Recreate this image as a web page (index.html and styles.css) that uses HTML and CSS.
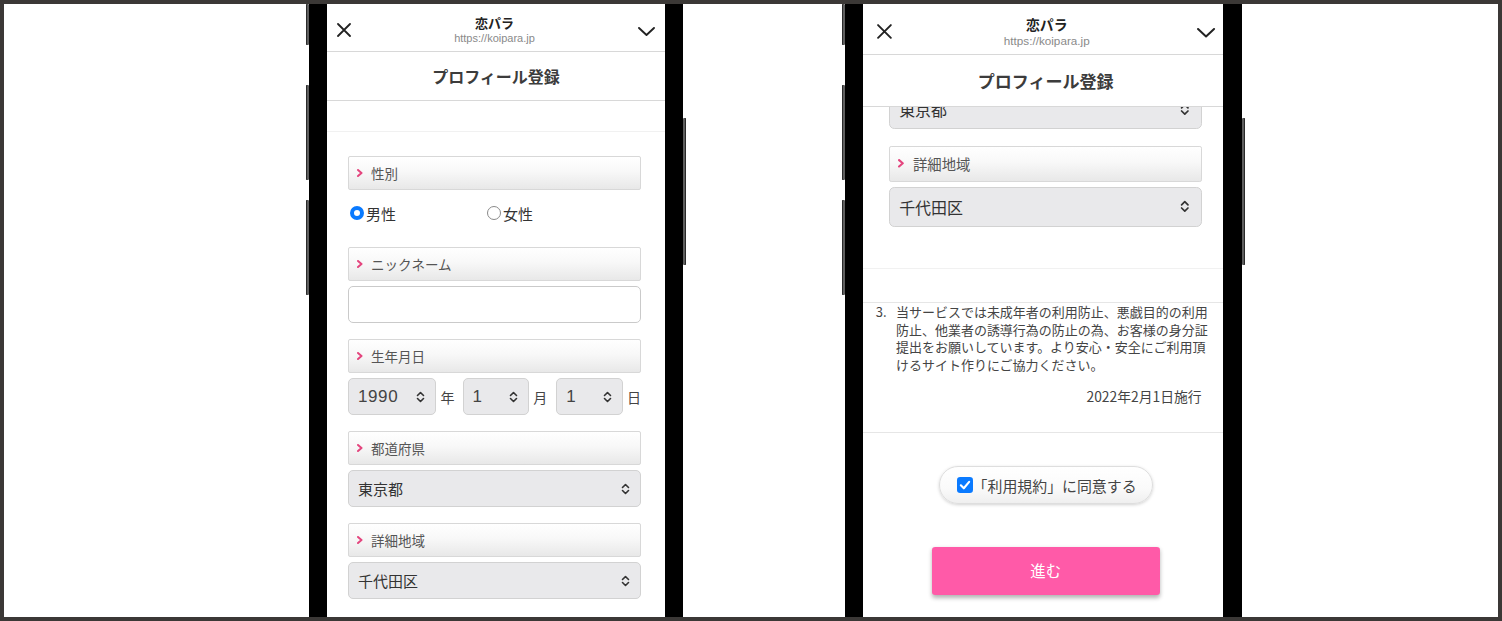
FILE: index.html
```html
<!DOCTYPE html>
<html lang="ja">
<head>
<meta charset="utf-8">
<title>プロフィール登録</title>
<link rel="stylesheet" href="styles.css">
</head>
<body>
<div class="canvas">

  <!-- Phone A -->
  <div class="phone phone-a">
    <div class="side side-left">
      <div class="btn btn-top"></div>
      <div class="btn btn-vol1"></div>
      <div class="btn btn-vol2"></div>
    </div>
    <div class="body">
      <div class="screen">
        <div class="topbar">
          <svg class="ic-x" width="14" height="14" viewBox="0 0 14 14"><path d="M1 1 L13 13 M13 1 L1 13" stroke="#222" stroke-width="1.8" fill="none" stroke-linecap="round"/></svg>
          <div class="site">
            <div class="site-name">恋パラ</div>
            <div class="site-url">https://koipara.jp</div>
          </div>
          <svg class="ic-chev" width="17" height="9" viewBox="0 0 17 9"><polyline points="1,1 8.5,8 16,1" stroke="#222" stroke-width="1.9" fill="none" stroke-linecap="round" stroke-linejoin="round"/></svg>
        </div>
        <div class="titlebar">プロフィール登録</div>
        <div class="spacer"></div>
        <div class="form">
          <div class="label"><svg class="mark" width="6" height="8" viewBox="0 0 6 8"><polyline points="1,1 4.5,4 1,7" stroke="#e4457e" stroke-width="2" fill="none" stroke-linecap="round" stroke-linejoin="round"/></svg>性別</div>
          <div class="radios">
            <span class="radio-item first"><span class="radio on"></span>男性</span>
            <span class="radio-item"><span class="radio"></span>女性</span>
          </div>

          <div class="label"><svg class="mark" width="6" height="8" viewBox="0 0 6 8"><polyline points="1,1 4.5,4 1,7" stroke="#e4457e" stroke-width="2" fill="none" stroke-linecap="round" stroke-linejoin="round"/></svg>ニックネーム</div>
          <div class="input"></div>

          <div class="label"><svg class="mark" width="6" height="8" viewBox="0 0 6 8"><polyline points="1,1 4.5,4 1,7" stroke="#e4457e" stroke-width="2" fill="none" stroke-linecap="round" stroke-linejoin="round"/></svg>生年月日</div>
          <div class="dates">
            <div class="select sel-year"><span class="num">1990</span><svg class="updown" width="9" height="12" viewBox="0 0 9 12"><path d="M1.5 4.5 L4.5 1.5 L7.5 4.5 M1.5 7.5 L4.5 10.5 L7.5 7.5" stroke="#333" stroke-width="1.6" fill="none" stroke-linecap="round" stroke-linejoin="round"/></svg></div>
            <span class="unit u-year">年</span>
            <div class="select sel-md"><span class="num">1</span><svg class="updown" width="9" height="12" viewBox="0 0 9 12"><path d="M1.5 4.5 L4.5 1.5 L7.5 4.5 M1.5 7.5 L4.5 10.5 L7.5 7.5" stroke="#333" stroke-width="1.6" fill="none" stroke-linecap="round" stroke-linejoin="round"/></svg></div>
            <span class="unit u-month">月</span>
            <div class="select sel-md"><span class="num">1</span><svg class="updown" width="9" height="12" viewBox="0 0 9 12"><path d="M1.5 4.5 L4.5 1.5 L7.5 4.5 M1.5 7.5 L4.5 10.5 L7.5 7.5" stroke="#333" stroke-width="1.6" fill="none" stroke-linecap="round" stroke-linejoin="round"/></svg></div>
            <span class="unit u-day">日</span>
          </div>

          <div class="label"><svg class="mark" width="6" height="8" viewBox="0 0 6 8"><polyline points="1,1 4.5,4 1,7" stroke="#e4457e" stroke-width="2" fill="none" stroke-linecap="round" stroke-linejoin="round"/></svg>都道府県</div>
          <div class="select full"><span>東京都</span><svg class="updown" width="9" height="12" viewBox="0 0 9 12"><path d="M1.5 4.5 L4.5 1.5 L7.5 4.5 M1.5 7.5 L4.5 10.5 L7.5 7.5" stroke="#333" stroke-width="1.6" fill="none" stroke-linecap="round" stroke-linejoin="round"/></svg></div>

          <div class="label"><svg class="mark" width="6" height="8" viewBox="0 0 6 8"><polyline points="1,1 4.5,4 1,7" stroke="#e4457e" stroke-width="2" fill="none" stroke-linecap="round" stroke-linejoin="round"/></svg>詳細地域</div>
          <div class="select full"><span>千代田区</span><svg class="updown" width="9" height="12" viewBox="0 0 9 12"><path d="M1.5 4.5 L4.5 1.5 L7.5 4.5 M1.5 7.5 L4.5 10.5 L7.5 7.5" stroke="#333" stroke-width="1.6" fill="none" stroke-linecap="round" stroke-linejoin="round"/></svg></div>
        </div>
      </div>
    </div>
    <div class="side side-right">
      <div class="btn btn-power"></div>
    </div>
  </div>

  <!-- Phone B -->
  <div class="phone phone-b">
    <div class="side side-left">
      <div class="btn btn-top"></div>
      <div class="btn btn-vol1"></div>
      <div class="btn btn-vol2"></div>
    </div>
    <div class="body">
      <div class="screen">
        <div class="topbar">
          <svg class="ic-x" width="14" height="14" viewBox="0 0 14 14"><path d="M1 1 L13 13 M13 1 L1 13" stroke="#222" stroke-width="1.8" fill="none" stroke-linecap="round"/></svg>
          <div class="site">
            <div class="site-name">恋パラ</div>
            <div class="site-url">https://koipara.jp</div>
          </div>
          <svg class="ic-chev" width="17" height="9" viewBox="0 0 17 9"><polyline points="1,1 8.5,8 16,1" stroke="#222" stroke-width="1.9" fill="none" stroke-linecap="round" stroke-linejoin="round"/></svg>
        </div>
        <div class="titlebar">プロフィール登録</div>
        <div class="form form-b">
          <div class="clip">
            <div class="select full"><span>東京都</span><svg class="updown" width="9" height="12" viewBox="0 0 9 12"><path d="M1.5 4.5 L4.5 1.5 L7.5 4.5 M1.5 7.5 L4.5 10.5 L7.5 7.5" stroke="#333" stroke-width="1.6" fill="none" stroke-linecap="round" stroke-linejoin="round"/></svg></div>
          </div>
          <div class="label"><svg class="mark" width="6" height="8" viewBox="0 0 6 8"><polyline points="1,1 4.5,4 1,7" stroke="#e4457e" stroke-width="2" fill="none" stroke-linecap="round" stroke-linejoin="round"/></svg>詳細地域</div>
          <div class="select full"><span>千代田区</span><svg class="updown" width="9" height="12" viewBox="0 0 9 12"><path d="M1.5 4.5 L4.5 1.5 L7.5 4.5 M1.5 7.5 L4.5 10.5 L7.5 7.5" stroke="#333" stroke-width="1.6" fill="none" stroke-linecap="round" stroke-linejoin="round"/></svg></div>
        </div>
        <div class="terms">
          <div class="term-item">
            <span class="term-no">3.</span>
            <span class="term-text">当サービスでは未成年者の利用防止、悪戯目的の利用<br>防止、他業者の誘導行為の防止の為、お客様の身分証<br>提出をお願いしています。より安心・安全にご利用頂<br>けるサイト作りにご協力ください。</span>
          </div>
          <div class="term-date">2022年2月1日施行</div>
        </div>
        <div class="agree-wrap">
          <label class="agree"><span class="check"><svg width="15" height="15" viewBox="0 0 15 15"><polyline points="3.6,7.8 6.4,10.6 11.4,4.6" stroke="#fff" stroke-width="2" fill="none" stroke-linecap="round" stroke-linejoin="round"/></svg></span>「利用規約」に同意する</label>
        </div>
        <div class="btn-wrap">
          <div class="next">進む</div>
        </div>
      </div>
    </div>
    <div class="side side-right">
      <div class="btn btn-power"></div>
    </div>
  </div>

</div>
</body>
</html>
```

FILE: styles.css
```css
html, body {
  margin: 0;
  padding: 0;
}
body {
  width: 1502px;
  height: 621px;
  box-sizing: border-box;
  padding: 4px;
  background: #3b3836;
  overflow: hidden;
  font-family: "Noto Sans CJK JP", "Liberation Sans", sans-serif;
  color: #333;
}
.canvas {
  height: 613px;
  background: #fff;
  display: flex;
  overflow: hidden;
}

/* phones */
.phone {
  display: flex;
  height: 613px;
}
.phone-a { margin-left: 302px; }
.phone-b { margin-left: 156px; }

.side {
  width: 3px;
  display: flex;
  flex-direction: column;
}
.btn {
  width: 3px;
  background: #5e5e5e;
  border-radius: 1px;
  box-shadow: inset 1px 0 0 #2a2a2a;
}
.side-right .btn { box-shadow: inset -1px 0 0 #2a2a2a; }
.btn-top { height: 41px; }
.btn-vol1 { height: 95px; margin-top: 40px; }
.btn-vol2 { height: 95px; margin-top: 20px; }
.btn-power { height: 147px; margin-top: 114px; }

.body {
  background: #000;
  padding-left: 18px;
  padding-right: 18px;
  height: 613px;
}
.phone-b .body { padding-right: 19px; }

.screen {
  width: 338px;
  height: 613px;
  background: #fff;
  overflow: hidden;
}
.phone-b .screen {
  zoom: 1.0651;
  height: 576px;
}

/* top bar */
.topbar {
  height: 48px;
  box-sizing: border-box;
  border-bottom: 1px solid #d8d8d8;
  display: flex;
  align-items: flex-start;
}
.ic-x {
  margin-top: 19px;
  margin-left: 10px;
  flex: none;
}
.ic-chev {
  margin-top: 23px;
  margin-right: 10px;
  flex: none;
}
.site {
  flex: 1;
  text-align: center;
  padding-top: 11px;
}
.site-name {
  font-size: 13px;
  font-weight: 700;
  line-height: 16px;
  color: #222;
}
.site-url {
  font-family: "Liberation Sans", "Noto Sans CJK JP", sans-serif;
  font-size: 11px;
  line-height: 15px;
  color: #8a8a8a;
}

.titlebar {
  height: 49px;
  box-sizing: border-box;
  border-bottom: 1px solid #d8d8d8;
  text-align: center;
  font-size: 16px;
  font-weight: 700;
  line-height: 48px;
  color: #3c3c3c;
}

.spacer {
  height: 31px;
  box-sizing: border-box;
  border-bottom: 1px solid #f1f1f1;
}

/* form */
.form {
  padding: 24px 24px 0 21px;
}
.label {
  height: 34px;
  box-sizing: border-box;
  border: 1px solid #d8d8d8;
  border-radius: 2px;
  background: linear-gradient(to bottom, #ffffff 0%, #f8f8f8 45%, #e8e8e8 100%);
  display: flex;
  align-items: center;
  padding-left: 8px;
  font-size: 13.5px;
  color: #555;
}
.mark {
  margin-right: 8px;
  flex: none;
}
.radios {
  margin-top: 12px;
  margin-bottom: 23px;
  height: 22px;
  display: flex;
  align-items: center;
  padding-left: 2px;
  font-size: 15px;
  color: #333;
}
.radio-item {
  display: inline-flex;
  align-items: center;
}
.radio-item.first { width: 137px; }
.radio {
  width: 14px;
  height: 14px;
  box-sizing: border-box;
  border-radius: 50%;
  border: 1px solid #8a8a8a;
  background: #fff;
  margin-right: 2px;
}
.radio.on {
  border: 4px solid #0a7aff;
}

.input {
  margin-top: 5px;
  margin-bottom: 16px;
  height: 37px;
  box-sizing: border-box;
  border: 1px solid #cacaca;
  border-radius: 5px;
  background: #fff;
}

.select {
  height: 37px;
  box-sizing: border-box;
  border: 1px solid #d2d2d2;
  border-radius: 5px;
  background: #e9e9eb;
  display: flex;
  align-items: center;
  justify-content: space-between;
  padding: 0 10px 0 9px;
  font-size: 15px;
  color: #333;
}
.select.full {
  margin-top: 5px;
  margin-bottom: 16px;
}
.updown { flex: none; }
.num {
  font-family: "Liberation Sans", sans-serif;
  font-size: 17px;
  letter-spacing: 0.6px;
  color: #444;
}
.dates {
  margin-top: 5px;
  margin-bottom: 16px;
  display: flex;
  align-items: center;
}
.sel-year { width: 88px; }
.sel-md { width: 67px; }
.unit {
  font-size: 14px;
  color: #444;
}
.u-year { margin: 0 8px 0 5px; }
.u-month { margin: 0 9px 0 4px; }
.u-day { margin-left: 4px; }

/* phone B */
.form-b {
  padding: 0 20px 39px 24px;
  border-bottom: 1px solid #f1f1f1;
}
.clip {
  height: 20px;
  overflow: hidden;
  display: flex;
  flex-direction: column;
  justify-content: flex-end;
  margin-bottom: 16px;
}
.clip .select.full {
  margin: 0;
  flex: none;
}
.form-b .select.full { margin-bottom: 0; }

.phone-b .ic-x { margin-left: 13px; }
.phone-b .ic-chev { margin-right: 7px; }
.phone-b .site { padding-left: 4px; }
.phone-b .titlebar { padding-left: 5px; }

.terms {
  margin-top: 31px;
  border-top: 1px solid #e6e6e6;
  border-bottom: 1px solid #e6e6e6;
  padding: 0 20px 25px 12px;
  font-size: 12.2px;
  line-height: 16.6px;
  color: #444;
}
.term-item {
  display: flex;
  white-space: nowrap;
}
.term-no {
  width: 19px;
  flex: none;
}
.term-date {
  margin-top: 13px;
  text-align: right;
  font-size: 13px;
}

.agree-wrap {
  display: flex;
  justify-content: center;
  padding-left: 5px;
  margin-top: 31px;
}
.agree {
  width: 201px;
  height: 36px;
  box-sizing: border-box;
  border: 1px solid #dedede;
  border-radius: 18px;
  background: linear-gradient(to bottom, #ffffff 0%, #fafafa 60%, #efefef 100%);
  box-shadow: 0 1px 3px rgba(0,0,0,0.18);
  display: flex;
  align-items: center;
  padding-left: 16px;
  font-size: 14px;
  color: #444;
}
.check {
  width: 15px;
  height: 15px;
  border-radius: 3px;
  background: #0a7aff;
  display: flex;
  flex: none;
}
.btn-wrap {
  display: flex;
  justify-content: center;
  padding-left: 5px;
  margin-top: 40px;
}
.next {
  width: 214px;
  height: 45px;
  border-radius: 3px;
  background: #ff5aa8;
  box-shadow: 0 2px 4px rgba(0,0,0,0.3);
  color: #fff;
  font-size: 14.5px;
  line-height: 45px;
  text-align: center;
}
```
